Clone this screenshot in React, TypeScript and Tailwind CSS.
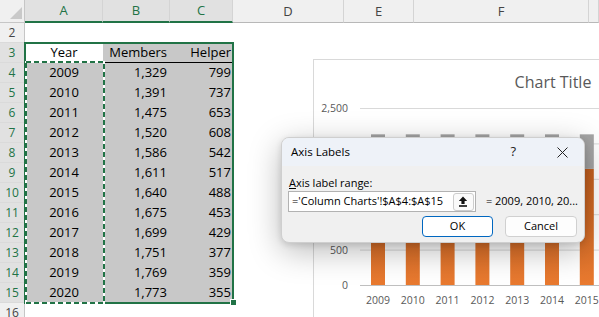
import clsx from "clsx";

const years = [2009, 2010, 2011, 2012, 2013, 2014, 2015, 2016, 2017, 2018, 2019, 2020];
const members = [1329, 1391, 1475, 1520, 1586, 1611, 1640, 1675, 1699, 1751, 1769, 1773];
const helper = [799, 737, 653, 608, 542, 517, 488, 453, 429, 377, 359, 355];

const columns = ["A", "B", "C", "D", "E", "F", ""];
const rowNums = [2, 3, 4, 5, 6, 7, 8, 9, 10, 11, 12, 13, 14, 15, 16];

const fmt = (n: number) => n.toLocaleString("en-US");

const ColumnHeaders = () => (
    <>
        <div className="relative h-[23px] border-b border-r border-[#c6c6c6] bg-[#f0f0f0]">
            <svg className="absolute left-0 top-0" width="25" height="22">
                <polygon points="10,19 22,19 22,7" fill="#c9c9c9" />
            </svg>
        </div>
        {columns.map((c, i) => {
            const sel = i < 3;
            return (
                <div
                    key={i}
                    className={clsx(
                        "flex h-[23px] items-center justify-center border-r border-[#d4d4d4] pt-px text-[13px]",
                        sel
                            ? "border-b-2 border-b-[#217346] bg-[#e1e1e1] text-[#217346]"
                            : "border-b border-b-[#b8b8b8] bg-[#f0f0f0] text-[#444]"
                    )}
                >
                    {c}
                </div>
            );
        })}
    </>
);

const SheetRow = ({ n }: { n: number }) => {
    const sel = n >= 3 && n <= 15;
    const i = n - 4;
    const hasData = n >= 4 && n <= 15;
    return (
        <>
            <div
                className={clsx(
                    "flex h-5 items-center justify-center border-b border-r border-b-[#dadada] border-r-[#c6c6c6] text-[12px]",
                    sel ? "bg-[#e1e1e1] text-[#217346]" : "bg-[#f0f0f0] text-[#444]"
                )}
            >
                {n}
            </div>
            {/* A */}
            <div
                className={clsx(
                    "flex h-5 items-center justify-center text-[13px] text-black",
                    hasData && "bg-[#c8c8c8]"
                )}
            >
                {n === 3 ? "Year" : hasData ? years[i] : ""}
            </div>
            {/* B */}
            <div
                className={clsx(
                    "flex h-5 items-center justify-end pr-[3px] text-[13px] text-black",
                    (hasData || n === 3) && "bg-[#c8c8c8]",
                    n === 3 && "border-b border-black"
                )}
            >
                {n === 3 ? "Members" : hasData ? fmt(members[i]) : ""}
            </div>
            {/* C */}
            <div
                className={clsx(
                    "flex h-5 items-center justify-end pr-[2px] text-[13px] text-black",
                    (hasData || n === 3) && "bg-[#c8c8c8]",
                    n === 3 && "border-b border-black"
                )}
            >
                {n === 3 ? "Helper" : hasData ? helper[i] : ""}
            </div>
            <div className="h-5" />
            <div className="h-5" />
            <div className="h-5" />
            <div className="h-5" />
        </>
    );
};

const Chart = () => {
    const unit = 177 / 2500;
    const base = 225;
    // labels for 1,000-2,000 sit under the dialog, only the gridlines show
    const shownLabels = [0, 500, 2500];
    return (
        <div className="absolute left-[313px] top-[59px] h-[270px] w-[300px] border border-[#d9d9d9] bg-white">
            <svg width="300" height="270" className="block">
                <defs>
                    <linearGradient id="orange" x1="0" y1="0" x2="0" y2="1">
                        <stop offset="0" stopColor="#c4601f" />
                        <stop offset="1" stopColor="#e97a30" />
                    </linearGradient>
                </defs>
                <text x="239" y="28" textAnchor="middle" fontSize="16" fill="#595959">
                    Chart Title
                </text>
                {[0, 500, 1000, 1500, 2000, 2500].map((v) => {
                    const y = base - v * unit;
                    return (
                        <g key={v}>
                            <line x1="46" x2="300" y1={y + 0.5} y2={y + 0.5} stroke={v === 0 ? "#bfbfbf" : "#d9d9d9"} />
                            {shownLabels.includes(v) && (
                                <text x="34" y={y + 4} textAnchor="end" fontSize="10.5" fill="#595959">
                                    {fmt(v)}
                                </text>
                            )}
                        </g>
                    );
                })}
                {years.slice(0, 8).map((yr, i) => {
                    const cx = 64 + i * 34.8;
                    const mh = members[i] * unit;
                    const hh = helper[i] * unit;
                    return (
                        <g key={yr}>
                            <rect x={cx - 7} y={base - mh} width="14" height={mh} fill="url(#orange)" />
                            <rect x={cx - 7} y={base - mh - hh} width="14" height={hh} fill="#a5a5a5" />
                            <text x={cx} y="244" textAnchor="middle" fontSize="10.5" fill="#595959">
                                {yr}
                            </text>
                        </g>
                    );
                })}
            </svg>
        </div>
    );
};

const Dialog = () => (
    <div className="absolute left-[281px] top-[137px] h-[106px] w-[304px] overflow-hidden rounded-lg border border-[#cfcfcf] bg-[#f0f0f0] text-[11px] text-black shadow-[0_8px_32px_rgba(0,0,0,0.28),0_2px_6px_rgba(0,0,0,0.12)]">
        <div className="flex h-[28px] items-center bg-[#eef2f8] pl-[9px]">
            <span className="text-[11.5px]">Axis Labels</span>
            <span className="ml-auto mr-[41px] text-[13px] text-[#222]">?</span>
            <svg width="11" height="11" className="mr-[16px]">
                <path d="M0.5 0.5 L10.5 10.5 M10.5 0.5 L0.5 10.5" stroke="#222" strokeWidth="1" />
            </svg>
        </div>
        <div className="px-[6px] pt-[9px]">
            <div className="h-4 pl-px leading-4">
                <span className="underline">A</span>xis label range:
            </div>
            <div className="flex h-[21px] items-center">
                <div className="flex h-[21px] w-[200px] items-center border border-[#b2b2b2] bg-white pl-[3px] pr-px">
                    <span className="flex-1 whitespace-nowrap">='Column Charts'!$A$4:$A$15</span>
                    <div className="flex h-[18px] w-[21px] items-center justify-center rounded-[3px] border border-[#cdcdcd] bg-[#fafafa]">
                        <svg width="10" height="11" viewBox="0 0 10 11">
                            <path d="M5 0.5 L0.8 5 H3.4 V8 H6.6 V5 H9.2 Z" fill="#111" />
                            <rect x="1" y="9.2" width="8" height="1.6" fill="#111" />
                        </svg>
                    </div>
                </div>
                <span className="ml-[10px] whitespace-nowrap">= 2009, 2010, 20...</span>
            </div>
            <div className="mt-1 flex justify-end gap-[12px] pr-[1px]">
                <button className="flex h-[21px] w-[71px] items-center justify-center rounded-[4px] border border-[#0067c0] bg-white">
                    OK
                </button>
                <button className="flex h-[21px] w-[72px] items-center justify-center rounded-[4px] border border-[#d0d0d0] bg-[#fdfdfd]">
                    Cancel
                </button>
            </div>
        </div>
    </div>
);

export default function App() {
    return (
        <div className="relative h-[317px] w-[599px] overflow-hidden bg-white font-['Open_Sans',sans-serif]">
            <div className="grid grid-cols-[25px_78px_67px_63px_111px_70px_175px_10px]">
                <ColumnHeaders />
                {rowNums.map((n) => (
                    <SheetRow key={n} n={n} />
                ))}
            </div>

            {/* selection */}
            <div className="absolute left-[24px] top-[42px] h-[262px] w-[210px] border-2 border-[#217346]" />
            {/* copy marquee */}
            <svg className="absolute left-[24px] top-[60px]" width="82" height="245">
                <rect x="2" y="2" width="78" height="241" fill="none" stroke="#ffffff" strokeWidth="2" />
                <rect x="2" y="2" width="78" height="241" fill="none" stroke="#217346" strokeWidth="2" strokeDasharray="5 3" />
            </svg>
            <div className="absolute left-[230px] top-[299px] h-[7px] w-[7px] border border-white bg-[#217346]" />

            <Chart />
            <Dialog />
        </div>
    );
}
